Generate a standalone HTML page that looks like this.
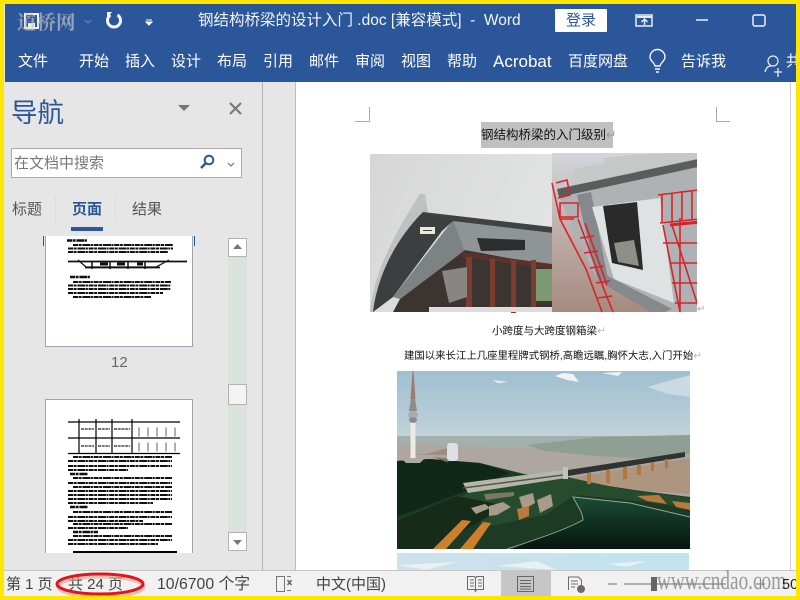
<!DOCTYPE html>
<html lang="zh"><head><meta charset="utf-8"><title>Word</title>
<style>
*{box-sizing:border-box}
html,body{margin:0;padding:0;width:800px;height:600px;overflow:hidden;background:#ffe600}
body{position:relative;font-family:"Liberation Sans","Noto Sans CJK SC",sans-serif}
.a,.t{position:absolute}
.t{white-space:nowrap;line-height:1}
.r{color:#fff;font-size:15px;top:54px}
.s{color:#444;font-size:15px;top:577px}
.d{color:#111;font-size:10.5px}
</style></head><body>
<div class="a" style="left:4px;top:4px;width:792px;height:592px;background:#e6e6e6"></div>
<div class="a" style="left:5px;top:4px;width:791px;height:78px;background:#2b579a"></div>

<!-- title bar icons -->
<svg class="a" style="left:0;top:0" width="800" height="82">
<rect x="25" y="14" width="13" height="14" fill="none" stroke="#f4f4f4" stroke-width="2"/><rect x="28" y="23" width="7" height="5" fill="#f4f4f4"/>
<path d="M85 20l3 3 3-3" fill="none" stroke="#6f8bb8"/>
<path d="M110.500 15a6.500 6.500 0 1 0 7 0" fill="none" stroke="#f5f5f5" stroke-width="3"/><path d="M112 12h-5v6z" fill="#f5f5f5"/>
<path d="M146 20h6M146 22l3 3 3-3z" fill="#fff" stroke="#fff"/>
<rect x="636" y="15" width="16" height="11" fill="none" stroke="#e6ebf3" stroke-width="1.500"/><path d="M637 17h15" stroke="#e6ebf3" stroke-width="2"/><path d="M644.500 25v-6M641.500 22l3-3 3 3" fill="none" stroke="#e6ebf3" stroke-width="1.500"/>
<path d="M696 20h12" stroke="#eef" stroke-width="1.500"/>
<rect x="753" y="15" width="12" height="11" rx="2" fill="none" stroke="#eef" stroke-width="1.500"/>
<path d="M655 66c-1-4-5-5-5-9a7.500 7.500 0 0 1 15 0c0 4-4 5-5 9z M655 69h5M656 72h3" fill="none" stroke="#f4f4f4" stroke-width="1.400"/>
<circle cx="773" cy="61" r="5" fill="none" stroke="#e8edf5" stroke-width="1.200"/><path d="M765 72c1-4 3-6 6-6" fill="none" stroke="#e8edf5" stroke-width="1.200"/><path d="M778 68v9M774 72h8" stroke="#e8edf5" stroke-width="1.300"/>
</svg>
<div class="t" style="left:17px;top:12px;font-size:19.500px;color:rgba(190,190,190,.72);font-weight:bold;font-family:'Noto Serif CJK SC',serif">道桥网</div>
<div class="t" style="left:198px;top:13px;font-size:15.500px;color:#f2f4f8">钢结构桥梁的设计入门 .doc [兼容模式]&nbsp; -&nbsp; Word</div>
<div class="a" style="left:555px;top:9px;width:52px;height:23px;background:#fff;border-radius:1px"></div>
<div class="t" style="left:566px;top:13px;font-size:15px;color:#2b579a">登录</div>

<!-- ribbon tabs -->
<div class="t r" style="left:18px">文件</div>
<div class="t r" style="left:79px">开始</div>
<div class="t r" style="left:125px">插入</div>
<div class="t r" style="left:171px">设计</div>
<div class="t r" style="left:217px">布局</div>
<div class="t r" style="left:263px">引用</div>
<div class="t r" style="left:309px">邮件</div>
<div class="t r" style="left:355px">审阅</div>
<div class="t r" style="left:401px">视图</div>
<div class="t r" style="left:447px">帮助</div>
<div class="t r" style="left:493px;font-size:17px;top:53px">Acrobat</div>
<div class="t r" style="left:568px">百度网盘</div>
<div class="t r" style="left:681px">告诉我</div>
<div class="t r" style="left:786px">共</div>

<!-- nav pane -->
<div class="t" style="left:11px;top:100px;font-size:26.500px;color:#2b579a">导航</div>
<svg class="a" style="left:170px;top:100px" width="80" height="20"><path d="M8 5h12l-6 6z" fill="#7a7575"/><path d="M60 3l11 11M71 3L60 14" stroke="#777" stroke-width="2"/></svg>
<div class="a" style="left:11px;top:148px;width:231px;height:30px;background:#fff;border:1px solid #aaa"></div>
<div class="t" style="left:14px;top:156px;font-size:15px;color:#777">在文档中搜索</div>
<svg class="a" style="left:198px;top:153px" width="40" height="20"><circle cx="11" cy="7" r="4.300" fill="none" stroke="#2b579a" stroke-width="2"/><path d="M8 10l-5 5" stroke="#2b579a" stroke-width="2.500"/><path d="M30 10l3 3 3-3" fill="none" stroke="#666"/></svg>
<div class="t" style="left:12px;top:202px;font-size:15px;color:#555">标题</div>
<div class="t" style="left:72px;top:202px;font-size:15px;font-weight:bold;color:#2b579a">页面</div>
<div class="t" style="left:132px;top:202px;font-size:15px;color:#555">结果</div>
<div class="a" style="left:55px;top:196px;width:1px;height:26px;background:#dcdcdc"></div>
<div class="a" style="left:115px;top:196px;width:1px;height:26px;background:#dcdcdc"></div>
<div class="a" style="left:71px;top:227px;width:32px;height:4px;background:#2b579a"></div>

<!-- thumbnails -->
<div class="a" style="left:43px;top:236px;width:1px;height:10px;background:#2b579a"></div>
<div class="a" style="left:194px;top:236px;width:1px;height:10px;background:#2b579a"></div>
<div class="a" style="left:45px;top:236px;width:148px;height:111px;background:#fff;border:1px solid #9aa5ad;border-top:0"></div>
<svg class="a" style="left:45px;top:236px" width="150" height="80">
<g fill="none" stroke="#111" stroke-width="1.900" stroke-dasharray="5 .6 3 .8 8 .5 2 .7">
<path d="M22 4.500h20" stroke-width="2.400"/>
<path d="M28 9h100M23 12.500h105M23 16h100"/>
<path d="M25 41h20" stroke-width="2.400"/>
<path d="M28 46h98M23 49.500h103M23 53h103M23 57h95M28 61h78"/>
</g>
<g fill="none" stroke="#111"><path d="M23 25.500h119" stroke-width="1.800"/><path d="M33 24l8 7h70l13-7" stroke-width="1.200"/><path d="M40 31.500h75" stroke-width="1.800"/><path d="M47 25v8M65 25v8M83 25v8M100 25v8" stroke-width="1.500"/><path d="M55 28h8M72 28h8M92 28h6" stroke-width="3"/></g>
</svg>
<div class="t" style="left:111px;top:355px;font-size:15px;color:#666">12</div>
<div class="a" style="left:45px;top:399px;width:148px;height:154px;background:#fff;border:1px solid #9aa5ad;border-bottom:0"></div>
<svg class="a" style="left:45px;top:399px" width="150" height="154">
<g fill="none" stroke="#000" stroke-width="1.200">
<path d="M23 23h112M23 39h112M23 54.500h112"/>
<path d="M34 20v35M51 20v35M67 20v35M87 20v35"/>
<path d="M36 30h13M53 30h12M69 30h16M36 47h13M53 47h12M69 47h16" stroke-width="1.500" stroke-dasharray="3 .7" opacity=".7"/>
<path d="M93 33h38M93 48h38" stroke="#8f8f8f" stroke-width="9" stroke-dasharray="2 7" opacity=".7"/>
</g>
<g fill="none" stroke="#111" stroke-width="1.900" stroke-dasharray="5 .6 3 .8 8 .5 2 .7">
<path d="M28 58h99M23 62h104M23 67h104M23 71h60"/>
<path d="M25 75h18" stroke-width="2.400"/>
<path d="M28 79h99M23 84h104M28 88h99M23 92h104M23 96h104M23 100h104M23 104h85"/>
<path d="M25 108h18" stroke-width="2.400"/>
<path d="M28 113h99M23 118h104M23 122h75M28 125h99M23 129h60"/>
<path d="M28 133h25" stroke-width="2.400"/>
<path d="M28 137h99M23 141h104M23 145h90"/>
</g>
<path d="M28 153h104" stroke="#000" stroke-width="2"/>
</svg>

<!-- nav scrollbar -->
<div class="a" style="left:228px;top:238px;width:19px;height:313px;background:#d9e2dd"></div>
<div class="a" style="left:228px;top:238px;width:19px;height:19px;background:#fff;border:1px solid #b6b2b4"></div>
<svg class="a" style="left:228px;top:238px" width="19" height="19"><path d="M5 11h9l-4.500-5z" fill="#777"/></svg>
<div class="a" style="left:228px;top:384px;width:19px;height:21px;background:#f4f4f4;border:1px solid #b6b2b4"></div>
<div class="a" style="left:228px;top:532px;width:19px;height:19px;background:#fff;border:1px solid #b6b2b4"></div>
<svg class="a" style="left:228px;top:532px" width="19" height="19"><path d="M5 8h9l-4.500 5z" fill="#777"/></svg>

<!-- splitter + doc -->
<div class="a" style="left:262px;top:82px;width:1px;height:488px;background:#b4b4b4"></div>
<div class="a" style="left:295px;top:82px;width:1px;height:488px;background:#bdbdbd"></div>
<div class="a" style="left:296px;top:82px;width:494px;height:488px;background:#fff"></div>
<div class="a" style="left:790px;top:82px;width:6px;height:488px;background:#fff;border-left:1px solid #ccc"></div>
<svg class="a" style="left:350px;top:100px" width="380" height="30"><path d="M19.500 7v14.500H5M366.500 7v14.500H381" fill="none" stroke="#a9a9a9"/></svg>

<div class="a" style="left:481px;top:122px;width:132px;height:26px;background:#c0c0c0"></div>
<div class="t" style="left:481px;top:129px;font-size:12.500px;color:#111">钢结构桥梁的入门级别<span style="color:#999">↵</span></div>

<!-- image 1 -->
<svg class="a" style="left:370px;top:153px" width="336" height="160" viewBox="0 0 336 160">
<defs><linearGradient id="sk" x1="0" x2="1" y1="0" y2=".4"><stop offset="0" stop-color="#d6d6d6"/><stop offset="1" stop-color="#e2e4e3"/></linearGradient>
<linearGradient id="wt" x1="0" x2="0" y1="0" y2="1"><stop offset="0" stop-color="#d2d6dc"/><stop offset=".4" stop-color="#c2b6b2"/><stop offset="1" stop-color="#a78a7e"/></linearGradient></defs>
<rect y="1" width="182" height="158" fill="url(#sk)"/>
<path d="M50 41l5 0 3 19L20 116 4 159H0c3-35 22-75 50-118z" fill="#bfc1c1"/>
<path d="M53 59L83 68 72 78 23 144 3 159c5-40 25-75 50-100z" fill="#3b3f3f"/>
<path d="M83 67l12 30L30 146l-7-2z" fill="#7d8384"/>
<path d="M53 59l129 15v6L82 69z" fill="#3f4243"/>
<path d="M83 68l99 12v33L95 97z" fill="#8f9597"/>
<path d="M107 85l48 2 0 10-44 1z" fill="#2b2d2e"/>
<path d="M95 97l87 16v46H23l7-13z" fill="#3b3431"/>
<path d="M92 99l90 12v5L92 104z" fill="#5d3129"/>
<g fill="#7a3d30"><rect x="96" y="104" width="6" height="55"/><rect x="120" y="106" width="5" height="53"/><rect x="141" y="107" width="5" height="53"/><rect x="161" y="107" width="5" height="52"/></g>
<path d="M72 118l25-4v30l-18 6z" fill="#878682"/>
<path d="M166 116h16v32h-16z" fill="#7b9a72"/>
<rect x="50" y="74" width="15" height="7" fill="#eee9d6"/><path d="M53 77.500h9" stroke="#444"/>
<path d="M59 154h123v5H59z" fill="#dcdcdc"/>
<rect x="182" width="146" height="159" fill="url(#wt)"/>
<path d="M204 30V16l30-6 0-5 25-3 40-2h29v12z" fill="#c6c8c8"/>
<path d="M187 40L328 9v150h-30l-71-32z" fill="#aeb2b4"/>
<path d="M187 36l141-30v8L189 44z" fill="#5b5d5d"/>
<path d="M207 42l14-3 18 92-12-6z" fill="#85898b"/>
<path d="M222 54l68-9 14 105-60-24z" fill="#dfe2e3"/>
<path d="M233 53l34-4 6 68-31-7z" fill="#2a2a2a"/>
<path d="M244 90l20-3 5 26-21-4z" fill="#8f8f8a"/>
<path d="M227 127l9-5 66 34-7 3h-14z" fill="#85898b"/>
<g fill="none" stroke="#d8232a" stroke-width="1.600">
<path d="M182 30l8 36 14 0M190 66l26 50 16 43M208 66l27 73 8 20M186 30l11-3 3 15-12 3M190 50h18v14h-18z"/>
<path d="M215 70l22 62M210 85l14-2M214 100l14-2M220 115l14-2M226 130l14-2M228 145l14-2"/>
<path d="M288 42l40-5M290 70l40-4M292 42v28M302 40v30M312 38v30M322 37v30"/>
<path d="M293 72l17 87M302 72l28 87M310 65v94M328 67v92M293 90h36M300 110h30M302 130h30M305 150h28" />
<path d="M300 72l30-3" stroke-width="3"/>
</g>
<rect x="327" y="0" width="9" height="160" fill="#fff"/>
<text x="327" y="159" font-size="10" fill="#aaa" font-family="Liberation Sans">↵</text>
</svg>

<div class="t d" style="left:492px;top:326px;font-size:10.500px">小跨度与大跨度钢箱梁<span style="color:#bbb">↵</span></div>
<div class="t d" style="left:404px;top:352px;font-size:10.400px">建国以来长江上几座里程牌式钢桥,高瞻远瞩,胸怀大志,入门开始<span style="color:#bbb">↵</span></div>

<!-- image 2 -->
<svg class="a" style="left:397px;top:371px" width="293" height="199" viewBox="0 0 293 199">
<defs><linearGradient id="s2" x1="0" x2="0" y1="0" y2="1"><stop offset="0" stop-color="#9fbfd2"/><stop offset="1" stop-color="#c3d3da"/></linearGradient>
<linearGradient id="s3" x1="0" x2="1" y1="0" y2="0"><stop offset="0" stop-color="#cde2ea"/><stop offset="1" stop-color="#bfe3ef"/></linearGradient>
<linearGradient id="lk" x1="0" x2="0" y1="0" y2="1"><stop offset="0" stop-color="#1a4c36"/><stop offset="1" stop-color="#07150e"/></linearGradient></defs>
<rect width="293" height="70" fill="url(#s2)"/>
<path d="M158 5l8-3 10 1 6 8-12-2zM205 2l20-1-4 4zM96 9l15 2-10 1z" fill="#f0f3f4"/>
<path d="M250 16l43-12v22l-22-3z" fill="#c9dae2"/>
<rect y="66" width="293" height="70" fill="#aea6a1"/>
<path d="M0 65h293v7l-90 10-50-5-60-1L0 72z" fill="#a4b0ab"/>
<path d="M130 74l70-8 93-2v19l-55 4-40-2-50-5z" fill="#8f9f93"/>
<path d="M0 83h30l20-6v7z" fill="#9b8c88"/>
<path d="M172 107l121-20v36l-70-5z" fill="#ad967f"/>
<path d="M0 90l33-2 50 4 44 11 40 5 70 11 56 7v52H0z" fill="#1c3a24"/>
<path d="M0 90l33-2 50 4 30 10-55 22L0 146z" fill="#102817"/>
<path d="M60 126l60-18 50-2 60 13 63 8v10l-60-8-55-5-30 20-60 12z" fill="#264b2d"/>
<path d="M0 150l60-25 50 10-35 20-40 23H0z" fill="#162b1a"/>
<path d="M176 126l57 6 60 14v32H115l71-29z" fill="url(#lk)"/>
<path d="M110 178c25-8 60-20 76-29 0-8-8-18-10-23l57 6 60 14" fill="none" stroke="#8fa793" stroke-width="1"/>
<path d="M66 112l100-13 3 8-98 15z" fill="#b5b7a9"/>
<path d="M66 117l100-13" stroke="#555" stroke-width="1.500"/>
<path d="M166 96h5v12h-5z" fill="#c3c3b8"/>
<path d="M171 99l117-18v5L171 105z" fill="#2f3331"/>
<g fill="#b4763e"><rect x="190" y="102" width="4" height="11"/><rect x="209" y="99" width="4" height="13"/><rect x="226" y="96" width="4" height="12"/><rect x="240" y="94" width="4" height="10"/><rect x="254" y="91" width="3" height="9"/><rect x="268" y="88" width="3" height="9"/></g>
<path d="M36 178l29-29 9 1-25 28zM63 178l23-27 8 1-18 26z" fill="#cd802c"/>
<path d="M74 137l14-4 5 4-14 6zM92 135l14-4 8 5-14 8-8 1zM122 126l14-4 2 10-12 7zM140 129l14-6 2 12-13 7z" fill="#a89b8c"/>
<path d="M120 138l12-3 0 10-10 4zM240 125l22-1 8 9-20-3zM275 130l18 2v7l-14-3z" fill="#b87a3f"/>
<path d="M87 123l30-2 0 4-28 4zM36 86l20 2-6 3z" fill="#7b7a61"/>
<rect x="13.500" y="50" width="5" height="37" fill="#ecebe6"/>
<path d="M15.500 0h1l2 28h-5z" fill="#9c7c72"/><path d="M14 28h4l2 12h-8z" fill="#8e8b8a"/>
<ellipse cx="16" cy="44" rx="5" ry="4" fill="#a8adb4"/><ellipse cx="16" cy="49" rx="4" ry="3" fill="#878b92"/>
<path d="M5 88h22l-4 4H9z" fill="#aaa"/>
<rect x="50" y="72" width="11" height="18" rx="3" fill="#dde0e6"/>
<rect y="178" width="293" height="4" fill="#fff"/>
<rect y="182" width="292" height="17" fill="url(#s3)"/>
<path d="M210 193l40-3-20 6zM100 195l40-5 20 9zM0 194l60-3-30 8z" fill="#e8f0f2"/>
</svg>

<!-- status bar -->
<div class="a" style="left:4px;top:570px;width:792px;height:26px;background:#f1f1f1;border-top:1px solid #c6c6c6"></div>
<div class="t s" style="left:6px">第 1 页</div>
<div class="t s" style="left:68px">共 24 页</div>
<div class="t s" style="left:157px;font-size:15.800px">10/6700 个字</div>
<div class="t s" style="left:316px">中文(中国)</div>
<svg class="a" style="left:0;top:565px" width="800" height="35">
<ellipse cx="100" cy="20" rx="43" ry="10" fill="none" stroke="#d9a58f" stroke-width="3" transform="translate(1,2)" opacity=".6"/>
<ellipse cx="100" cy="19" rx="43" ry="10" fill="none" stroke="#e5141c" stroke-width="3"/>
<path d="M276.500 11.500h8v15h-8zM287 11.500h4M287 25.500h4" fill="none" stroke="#777"/><path d="M287.500 15l4 5M291.500 15l-4 5" stroke="#666" stroke-width="1.500"/>
<path d="M467.500 11.500h7l1 2 1-2h7v13h-7l-1 2-1-2h-7zM475.500 13v12M470 15h4M470 18h4M470 21h4M478 15h4M478 18h4M478 21h4" fill="none" stroke="#6e6a6c"/>
<rect x="501" y="6" width="50" height="26" fill="#c6c6c6"/>
<path d="M517.500 11.500h16v15h-16zM520 15.500h11M520 18.500h11M520 21.500h11M520 24h11" fill="none" stroke="#666"/>
<path d="M568.500 25v-13h10l3 3v5M571 16h7M571 19h7M571 22h4" fill="none" stroke="#6e6a6c"/><circle cx="581" cy="24" r="4" fill="#6e6a6c"/>
<path d="M608 19h9M624 19h102M756 19h9M760.500 14v10" stroke="#888" stroke-width="1.300"/>
<rect x="651" y="12" width="6" height="14" fill="#666"/>
</svg>
<div class="t" style="left:657px;top:568px;font-size:26px;color:rgba(120,120,120,.72);font-family:'Liberation Serif',serif;transform:scaleX(.74);transform-origin:left">www.cndao.com</div>
<div class="t" style="left:782px;top:578px;font-size:14.500px;color:#222">50</div>
<div class="a" style="left:796px;top:0;width:4px;height:600px;background:#ffe600"></div>
<div class="a" style="left:0;top:596px;width:800px;height:4px;background:#ffe600"></div>
</body></html>
